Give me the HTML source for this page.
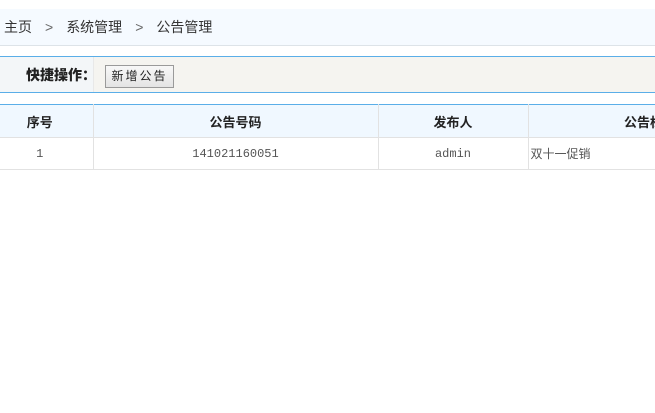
<!DOCTYPE html>
<html><head><meta charset="utf-8"><style>
body{margin:0;width:655px;height:413px;overflow:hidden;background:#fff;font-family:"Liberation Sans","Noto Sans CJK SC",sans-serif;font-size:13px;color:#333;position:relative}
.bc{position:absolute;top:9px;left:0;width:651px;padding-left:4px;height:36px;background:#f5faff;border-bottom:1px solid #dde3e8;line-height:36px;color:#333;font-size:14px}
.bc span{margin:0 13px 0 13px;color:#666}
.tb{position:absolute;top:56px;left:0;width:655px;height:35px;border-top:1px solid #5aaee8;border-bottom:1px solid #5aaee8;background:#f5f4f0}
.tb .lab{position:absolute;left:0;top:0;width:93px;height:35px;background:#f3f6f8;border-right:1px solid #e8e8e8;line-height:37px;font-weight:bold;font-size:14px;color:#222}
.tb .lab b{position:absolute;left:26px;top:0;white-space:nowrap}
.tb .btn{position:absolute;left:105px;top:8px;width:67px;height:21px;border:1px solid #9a9a9a;background:linear-gradient(#f8f8f8,#e4e4e4);font-size:12px;line-height:21px;text-align:center;letter-spacing:2px;color:#222}
table{position:absolute;top:104px;left:-13px;border-collapse:collapse;width:820px;table-layout:fixed}
th{height:32px;background:#f0f8ff;border-top:1px solid #5aaee8;border-right:1px solid #e2e2e2;border-bottom:1px solid #e2e2e2;font-size:13px;font-weight:bold;color:#222;text-align:center;padding:0}
td{height:31px;border-right:1px solid #e2e2e2;border-bottom:1px solid #e2e2e2;font-size:12px;color:#555;text-align:center;padding:0;font-family:"Liberation Mono","Noto Sans CJK SC",monospace}
</style></head><body>
<div class="bc">主页<span>&gt;</span>系统管理<span>&gt;</span>公告管理</div>
<div class="tb"><div class="lab"><b>快捷操作：</b></div><div class="btn">新增公告</div></div>
<table><colgroup><col style="width:106px"><col style="width:285px"><col style="width:150px"><col style="width:244px"><col style="width:35px"></colgroup>
<tr><th>序号</th><th>公告号码</th><th>发布人</th><th>公告标题</th><th></th></tr>
<tr><td>1</td><td>141021160051</td><td>admin</td><td style="text-align:left;padding-left:2px;font-family:'Liberation Sans','Noto Sans CJK SC',sans-serif">双十一促销</td><td></td></tr>
</table>
</body></html>
